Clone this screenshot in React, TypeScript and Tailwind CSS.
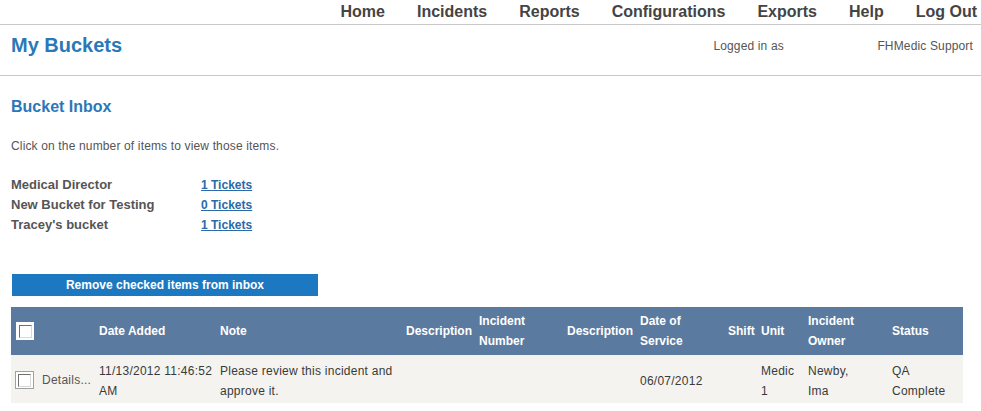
import React from "react";

const navItems = ["Home", "Incidents", "Reports", "Configurations", "Exports", "Help", "Log Out"];

const buckets = [
  { name: "Medical Director", count: "1 Tickets" },
  { name: "New Bucket for Testing", count: "0 Tickets" },
  { name: "Tracey's bucket", count: "1 Tickets" },
];

function CheckBox({ framed }: { framed?: boolean }) {
  return (
    <div
      className={
        framed
          ? "w-[19px] h-[18px] bg-white border border-[#a0a0a0] flex items-center justify-center"
          : "w-[18px] h-[18px] bg-white flex items-center justify-center"
      }
    >
      <div className="w-[13px] h-[13px] border-t border-l border-t-[#707070] border-l-[#707070] border-b border-r border-b-[#d8d8d8] border-r-[#d8d8d8]" />
    </div>
  );
}

export default function App() {
  return (
    <div className="w-[981px] h-[411px] bg-white overflow-hidden font-['Liberation_Sans',Arial,sans-serif] text-[#555]">
      {/* Top nav */}
      <nav className="h-[25px] border-b border-[#c8c8c8] flex justify-end items-center gap-[32px] pr-[4px]">
        {navItems.map((n) => (
          <a key={n} className="text-[16px] leading-[24px] font-bold text-[#444]">
            {n}
          </a>
        ))}
      </nav>

      {/* Page header */}
      <div className="h-[51px] border-b border-[#c8c8c8] flex items-start justify-between pl-[11px] pr-[8px] pt-[8px]">
        <h1 className="text-[20px] leading-[24px] font-bold text-[#2b78b8]">My Buckets</h1>
        <div className="flex pt-[6px] text-[12px] leading-[14px] tracking-[0.15px] text-[#555]">
          <span className="w-[164px]">Logged in as</span>
          <span>FHMedic Support</span>
        </div>
      </div>

      <div className="pl-[11px]">
        <h2 className="mt-[21px] text-[16px] leading-[20px] font-bold text-[#2b78b8]">Bucket Inbox</h2>
        <p className="mt-[22px] text-[12px] leading-[14px] tracking-[0.15px] text-[#555]">
          Click on the number of items to view those items.
        </p>

        <div className="mt-[22px] grid grid-cols-[190px_auto] justify-start items-baseline">
          {buckets.map((b) => (
            <React.Fragment key={b.name}>
              <span className="text-[13px] leading-[20px] font-bold text-[#555]">{b.name}</span>
              <a className="text-[12px] leading-[20px] font-bold text-[#2a6aa8] underline">{b.count}</a>
            </React.Fragment>
          ))}
        </div>

        <button className="mt-[39px] ml-[1px] w-[306px] h-[22px] bg-[#1c78c0] text-white text-[12px] font-bold leading-[22px] text-center">
          Remove checked items from inbox
        </button>

        <table className="mt-[11px] w-[952px] table-fixed border-collapse text-[12px] leading-[20px]">
          <colgroup>
            <col className="w-[85px]" />
            <col className="w-[121px]" />
            <col className="w-[186px]" />
            <col className="w-[73px]" />
            <col className="w-[88px]" />
            <col className="w-[73px]" />
            <col className="w-[88px]" />
            <col className="w-[33px]" />
            <col className="w-[47px]" />
            <col className="w-[84px]" />
            <col className="w-[74px]" />
          </colgroup>
          <thead>
            <tr className="h-[48px] bg-[#5b7a9f] text-white font-bold text-left">
              <th className="px-[5px] align-middle">
                <CheckBox />
              </th>
              <th className="px-[3px] font-bold whitespace-nowrap">Date Added</th>
              <th className="px-[3px] font-bold">Note</th>
              <th className="px-[3px] font-bold whitespace-nowrap">Description</th>
              <th className="px-[3px] font-bold">
                Incident
                <br />
                Number
              </th>
              <th className="px-[3px] font-bold whitespace-nowrap">Description</th>
              <th className="px-[3px] font-bold">
                Date of
                <br />
                Service
              </th>
              <th className="px-[3px] font-bold">Shift</th>
              <th className="px-[3px] font-bold">Unit</th>
              <th className="px-[3px] font-bold">
                Incident
                <br />
                Owner
              </th>
              <th className="px-[3px] font-bold">Status</th>
            </tr>
          </thead>
          <tbody>
            <tr className="h-[48px] bg-[#f4f3ef] text-[#3a3a3a] align-middle tracking-[0.25px]">
              <td className="pl-[4px] pr-[3px] pt-[2px]">
                <div className="flex items-center gap-[8px]">
                  <CheckBox framed />
                  <span className="text-[#555] whitespace-nowrap">Details...</span>
                </div>
              </td>
              <td className="px-[3px] pt-[4px] whitespace-nowrap">
                11/13/2012 11:46:52
                <br />
                AM
              </td>
              <td className="px-[3px] pt-[4px] whitespace-nowrap">
                Please review this incident and
                <br />
                approve it.
              </td>
              <td className="px-[3px]"></td>
              <td className="px-[3px]"></td>
              <td className="px-[3px]"></td>
              <td className="px-[3px] pt-[4px]">06/07/2012</td>
              <td className="px-[3px]"></td>
              <td className="px-[3px] pt-[4px]">
                Medic
                <br />1
              </td>
              <td className="px-[3px] pt-[4px]">
                Newby,
                <br />
                Ima
              </td>
              <td className="px-[3px] pt-[4px]">
                QA
                <br />
                Complete
              </td>
            </tr>
          </tbody>
        </table>
      </div>
    </div>
  );
}
